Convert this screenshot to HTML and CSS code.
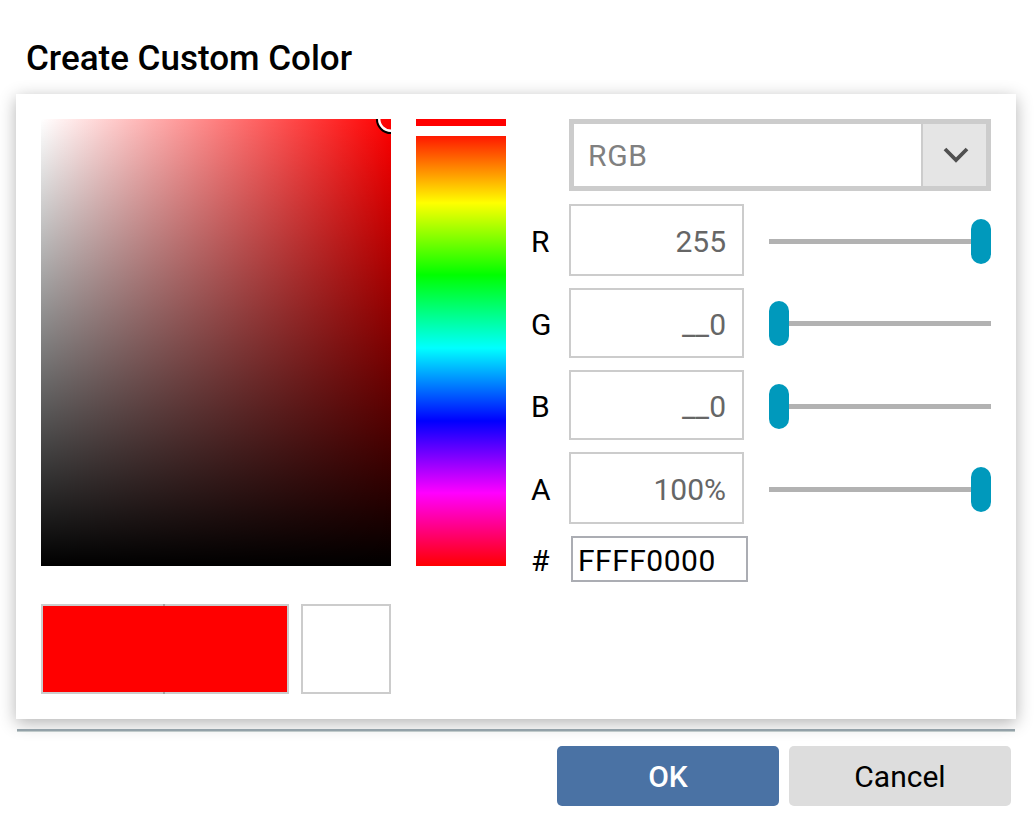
FILE: index.html
```html
<!DOCTYPE html>
<html lang="en">
<head>
<meta charset="utf-8">
<title>Create Custom Color</title>
<link rel="stylesheet" href="styles.css">
</head>
<body>
<main class="dialog">
  <h1 class="title">Create Custom Color</h1>
  <section class="card">
    <div class="visual">
      <div class="pickers">
        <div class="shade">
          <svg class="shade-marker" width="32" height="32" viewBox="0 0 32 32">
            <circle cx="16" cy="16" r="14" fill="none" stroke="#000" stroke-width="2.2"/>
            <circle cx="16" cy="16" r="11.8" fill="none" stroke="#fff" stroke-width="2.4"/>
          </svg>
        </div>
        <div class="hue"><div class="hue-thumb"></div></div>
      </div>
      <div class="swatches">
        <div class="compare"><span class="swatch old"></span><span class="swatch new"></span></div>
        <span class="swatch blank"></span>
      </div>
    </div>
    <div class="controls">
      <div class="select">
        <span class="select-value">RGB</span>
        <span class="select-arrow">
          <svg width="26" height="16" viewBox="0 0 26 16"><path d="M2 2 L13 13 L24 2" fill="none" stroke="#505050" stroke-width="3.8"/></svg>
        </span>
      </div>
      <div class="row tall"><label class="label">R</label><div class="field">255</div><div class="slider end"><i class="thumb"></i></div></div>
      <div class="row"><label class="label">G</label><div class="field">__0</div><div class="slider up"><i class="thumb"></i></div></div>
      <div class="row"><label class="label">B</label><div class="field">__0</div><div class="slider"><i class="thumb"></i></div></div>
      <div class="row tall"><label class="label">A</label><div class="field">100%</div><div class="slider end"><i class="thumb"></i></div></div>
      <div class="row hex-row"><label class="label">#</label><div class="hex">FFFF0000</div></div>
    </div>
  </section>
  <div class="rule"></div>
  <footer class="actions">
    <button class="button primary">OK</button>
    <button class="button">Cancel</button>
  </footer>
</main>
</body>
</html>
```
FILE: styles.css
```css
* { box-sizing: border-box; }
body {
  margin: 0;
  background: #fff;
  color: #000;
  font: 400 30px/36px Roboto, sans-serif;
}
.dialog { width: 1034px; height: 828px; overflow: hidden; padding: 37px 18px 0 16px; }
.title { margin: 0 0 13px 10px; font-size: 35px; line-height: 44px; font-weight: 500; }
.card {
  display: flex;
  height: 625px;
  padding: 25px;
  background: #fff;
  box-shadow: 0 4px 16px rgba(0, 0, 0, .3);
}
.visual { width: 465px; margin-right: 25px; }
.pickers { display: flex; gap: 25px; height: 447px; }
.shade {
  position: relative;
  width: 350px;
  overflow: hidden;
  background: linear-gradient(to top, #000, transparent), linear-gradient(to right, #fff, #f00);
}
.shade-marker { position: absolute; top: -16px; right: -16px; }
.hue {
  width: 90px;
  padding-top: 7px;
  background: linear-gradient(#f00 10px, #ff0 84px, #0f0 156px, #0ff 229px, #00f 302px, #f0f 374px, #f00 447px);
}
.hue-thumb { height: 10px; background: #fff; }
.swatches { display: flex; gap: 12px; margin-top: 38px; }
.compare { position: relative; display: flex; width: 248px; }
.swatch { height: 90px; border: 2px solid #ccc; background: #fff; }
.old, .new { width: 124px; background: #f00; background-clip: padding-box; }
.old { border-right: 0; }
.new { border-left: 0; }
.compare::before, .compare::after {
  content: "";
  position: absolute;
  left: 122px;
  width: 2px;
  height: 2px;
  background: #a3a3a3;
}
.compare::before { top: 0; }
.compare::after { bottom: 0; }
.blank { width: 90px; }
.controls { display: flex; flex-direction: column; gap: 12px; width: 460px; }
.select {
  display: flex;
  height: 72px;
  margin: 0 0 1px 38px;
  border: 5px solid #ccc;
}
.select-value { flex: 1; padding: 14px 14px; color: #808080; letter-spacing: .7px; }
.select-arrow {
  display: flex;
  align-items: center;
  justify-content: center;
  width: 65px;
  padding-left: 2px;
  border-left: 2px solid #ccc;
  background: #e5e5e5;
}
.row { display: flex; align-items: center; height: 70px; }
.tall { height: 72px; }
.label { width: 38px; padding-top: 3px; }
.field {
  display: flex;
  align-items: center;
  justify-content: flex-end;
  width: 175px;
  height: 100%;
  padding: 3px 16px 0 0;
  border: 2px solid #ccc;
  color: #666;
}
.slider {
  display: flex;
  width: 222px;
  height: 45px;
  margin: 3px 0 0 25px;
  background: linear-gradient(#b2b2b2, #b2b2b2) 0 20px / 100% 5px no-repeat;
}
.slider.up { margin-top: 1px; }
.end { justify-content: flex-end; }
.thumb { width: 20px; height: 45px; border-radius: 10px; background: #0099bc; }
.hex-row { height: 46px; }
.hex {
  width: 177px;
  height: 46px;
  margin-left: 2px;
  padding: 5px 5px;
  border: 2px solid #abadb3;
  letter-spacing: .5px;
}
.rule { position: relative; height: 3px; margin: 10px 1px 0; border-top: 2px solid #93a1a8; background: #c0caca; }
.actions { display: flex; justify-content: flex-end; gap: 10px; margin: 14px 5px 0 0; }
.button {
  width: 222px;
  height: 60px;
  padding: 1px 0 0;
  border: 0;
  border-radius: 5px;
  background: #ddd;
  color: #000;
  font: 400 30px/60px Roboto, sans-serif;
}
.primary { background: #4a72a4; color: #fff; font-weight: 500; }
```
